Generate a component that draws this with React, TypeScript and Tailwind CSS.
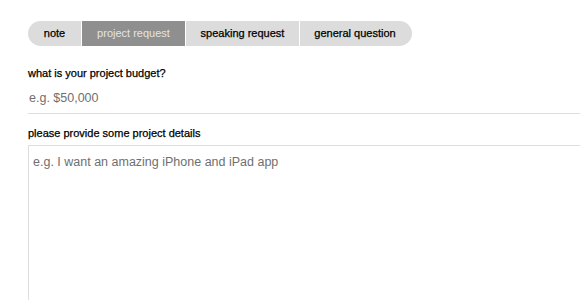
import React from "react";

export default function App() {
  return (
    <div className="w-[580px] h-[300px] overflow-hidden bg-white" style={{ fontFamily: '"Liberation Sans", Arial, sans-serif' }}>
      <div className="pl-[28px] pt-[21px] w-[700px]">
        <div className="flex h-[25px] w-fit rounded-full overflow-hidden bg-[#dcdcdc] text-[11px] [-webkit-text-stroke:0.25px]">
          <div className="flex items-center justify-center w-[53px] text-black">note</div>
          <div className="w-px bg-white" />
          <div className="flex items-center justify-center w-[103px] text-[#e4e4e4] bg-[#8f8f8f] [-webkit-text-stroke:0px]">project request</div>
          <div className="w-px bg-white" />
          <div className="flex items-center justify-center w-[113px] text-black">speaking request</div>
          <div className="w-px bg-white" />
          <div className="flex items-center justify-center w-[112px] text-black pr-[2px]">general question</div>
        </div>
        <div className="mt-[20px] text-[11px] text-black leading-[14px] [-webkit-text-stroke:0.25px]">what is your project budget?</div>
        <div className="mt-[8px] h-[26px] border-b border-[#dddddd] text-[12.5px] text-[#6f6f6f] leading-[20px] pl-px">e.g. $50,000</div>
        <div className="mt-[12px] text-[11px] text-black leading-[14px] [-webkit-text-stroke:0.25px]">please provide some project details</div>
        <div className="mt-[5px] h-[200px] border border-[#dddddd] px-[4px] pt-[6px] text-[12.5px] text-[#6f6f6f] leading-[20px]">
          e.g. I want an amazing iPhone and iPad app
        </div>
      </div>
    </div>
  );
}
